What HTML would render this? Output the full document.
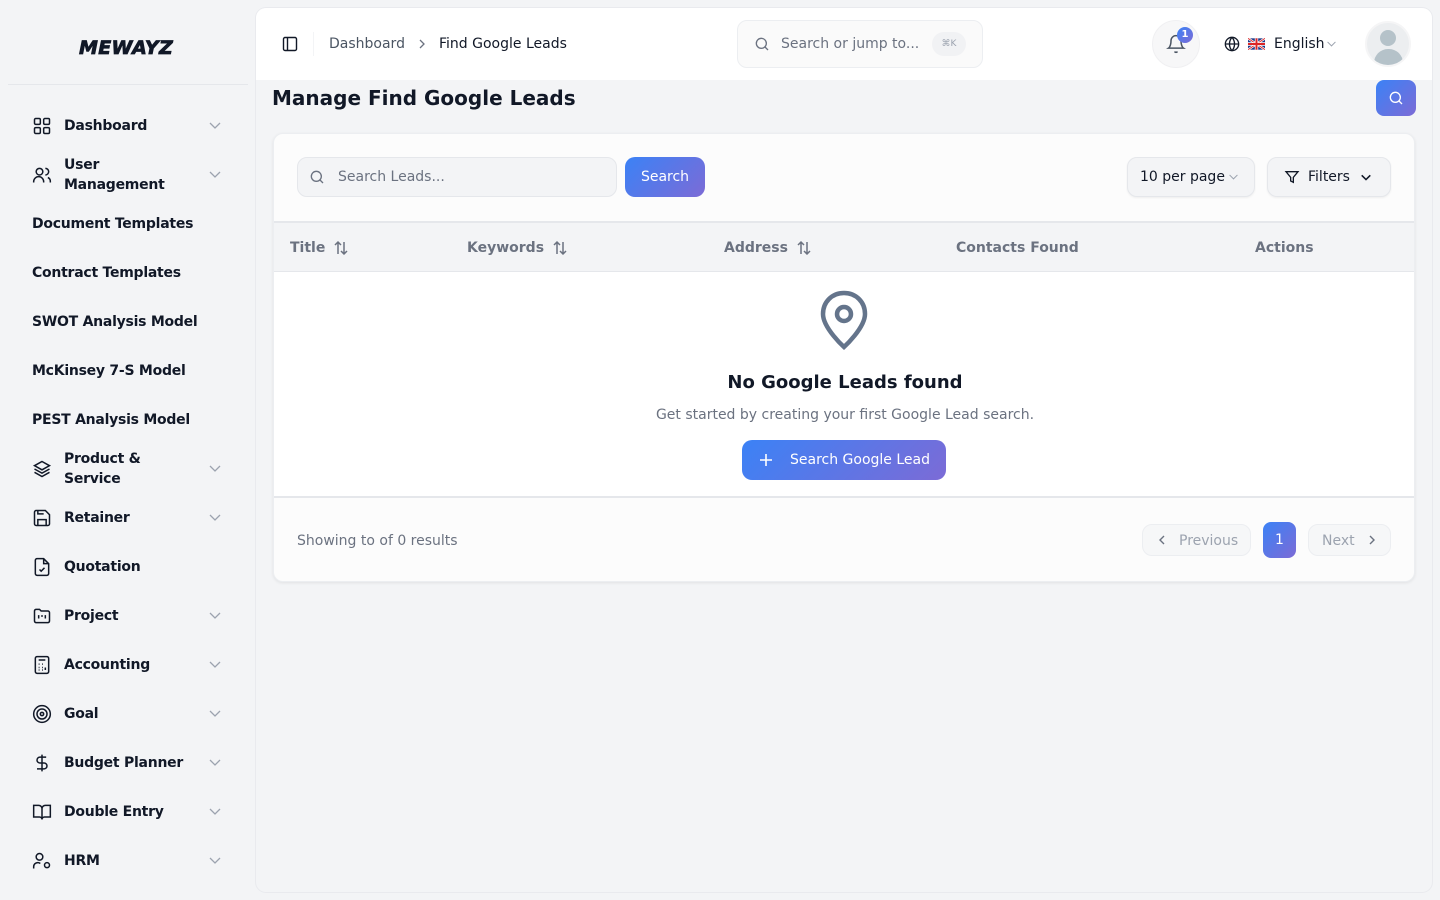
<!DOCTYPE html>
<html><head><meta charset="utf-8">
<style>
*{box-sizing:border-box;margin:0;padding:0}
body{width:1440px;height:900px;background:#f3f4f6;font-family:"DejaVu Sans","Liberation Sans",sans-serif;color:#111827;position:relative;overflow:hidden}
.abs{position:absolute}
svg{display:block}
.nav{position:absolute;left:32px;width:190px;display:flex;align-items:center;font-size:14px;font-weight:bold;color:#111827;line-height:20px;letter-spacing:-0.25px}
.nav .ic{width:20px;height:20px;margin-right:12px;flex:none}
.nav .ch{position:absolute;right:0;top:50%;margin-top:-8px}
.grad{background:linear-gradient(135deg,#3b82f6,#7c6bd6)}
.th{position:absolute;top:106px;font-size:14px;font-weight:bold;color:#6b7280;display:flex;align-items:center}
.th svg{margin-left:8px}
</style></head><body>
<svg width="0" height="0" style="position:absolute"><defs>
<symbol id="chev" viewBox="0 0 14 14"><path d="M2 5l5 5 5-5" fill="none" stroke="#9ca3af" stroke-width="1.3"/></symbol>
<symbol id="sort" viewBox="0 0 16 16"><path d="M5 14V2M2 5l3-3 3 3M11 2v12M8 11l3 3 3-3" fill="none" stroke="#6b7280" stroke-width="1.5"/></symbol>
</defs></svg>

<div class="abs" style="left:79px;top:37px;font-size:19px;font-weight:900;font-style:italic;letter-spacing:0.3px;-webkit-text-stroke:0.8px #111827">MEWAYZ</div>
<div class="abs" style="left:8px;top:84px;width:240px;height:1px;background:#e5e7eb"></div>

<div class="nav" style="top:116px"><svg class="ic" viewBox="0 0 24 24" fill="none" stroke="#111827" stroke-width="1.8"><rect x="3" y="3" width="7" height="7" rx="1.5"/><rect x="14" y="3" width="7" height="7" rx="1.5"/><rect x="3" y="14" width="7" height="7" rx="1.5"/><rect x="14" y="14" width="7" height="7" rx="1.5"/></svg>Dashboard<svg class="ch" width="14" height="14"><use href="#chev"/></svg></div>
<div class="nav" style="top:155px"><svg class="ic" viewBox="0 0 24 24" fill="none" stroke="#111827" stroke-width="1.8"><circle cx="9" cy="8" r="4"/><path d="M2 21v-1a6 6 0 0 1 12 0v1M16 4a4 4 0 0 1 0 8M19 15a5 5 0 0 1 3 5v1"/></svg><span>User<br>Management</span><svg class="ch" width="14" height="14"><use href="#chev"/></svg></div>
<div class="nav" style="top:214px">Document Templates</div>
<div class="nav" style="top:263px">Contract Templates</div>
<div class="nav" style="top:312px">SWOT Analysis Model</div>
<div class="nav" style="top:361px">McKinsey 7-S Model</div>
<div class="nav" style="top:410px">PEST Analysis Model</div>
<div class="nav" style="top:449px"><svg class="ic" viewBox="0 0 24 24" fill="none" stroke="#111827" stroke-width="1.8"><path d="M12 3l9 5-9 5-9-5z"/><path d="M3 12l9 5 9-5M3 16l9 5 9-5"/></svg><span>Product &amp;<br>Service</span><svg class="ch" width="14" height="14"><use href="#chev"/></svg></div>
<div class="nav" style="top:508px"><svg class="ic" viewBox="0 0 24 24" fill="none" stroke="#111827" stroke-width="1.8"><path d="M5 3h11l5 5v11a2 2 0 0 1-2 2H5a2 2 0 0 1-2-2V5a2 2 0 0 1 2-2z"/><path d="M7 21v-7h10v7M7 3v4h7"/></svg>Retainer<svg class="ch" width="14" height="14"><use href="#chev"/></svg></div>
<div class="nav" style="top:557px"><svg class="ic" viewBox="0 0 24 24" fill="none" stroke="#111827" stroke-width="1.8"><path d="M14 2H6a2 2 0 0 0-2 2v16a2 2 0 0 0 2 2h12a2 2 0 0 0 2-2V8z"/><path d="M14 2v6h6M9 15l2 2 4-4"/></svg>Quotation</div>
<div class="nav" style="top:606px"><svg class="ic" viewBox="0 0 24 24" fill="none" stroke="#111827" stroke-width="1.8"><path d="M3 6a2 2 0 0 1 2-2h4l2 2h8a2 2 0 0 1 2 2v10a2 2 0 0 1-2 2H5a2 2 0 0 1-2-2z"/><path d="M8 11v4M12 11v2M16 11v4"/></svg>Project<svg class="ch" width="14" height="14"><use href="#chev"/></svg></div>
<div class="nav" style="top:655px"><svg class="ic" viewBox="0 0 24 24" fill="none" stroke="#111827" stroke-width="1.8"><rect x="4" y="2" width="16" height="20" rx="2"/><path d="M8 6h8M8 11h1M12 11h1M16 11h0M8 15h1M12 15h1M16 15v3M8 18h1M12 18h1"/></svg>Accounting<svg class="ch" width="14" height="14"><use href="#chev"/></svg></div>
<div class="nav" style="top:704px"><svg class="ic" viewBox="0 0 24 24" fill="none" stroke="#111827" stroke-width="1.8"><circle cx="12" cy="12" r="10"/><circle cx="12" cy="12" r="6"/><circle cx="12" cy="12" r="2"/></svg>Goal<svg class="ch" width="14" height="14"><use href="#chev"/></svg></div>
<div class="nav" style="top:753px"><svg class="ic" viewBox="0 0 24 24" fill="none" stroke="#111827" stroke-width="1.8"><path d="M12 2v20M17 5H9.5a3.5 3.5 0 0 0 0 7h5a3.5 3.5 0 0 1 0 7H6"/></svg>Budget Planner<svg class="ch" width="14" height="14"><use href="#chev"/></svg></div>
<div class="nav" style="top:802px"><svg class="ic" viewBox="0 0 24 24" fill="none" stroke="#111827" stroke-width="1.8"><path d="M2 4h6a4 4 0 0 1 4 4v13a3 3 0 0 0-3-3H2zM22 4h-6a4 4 0 0 0-4 4v13a3 3 0 0 1 3-3h7z"/></svg>Double Entry<svg class="ch" width="14" height="14"><use href="#chev"/></svg></div>
<div class="nav" style="top:851px"><svg class="ic" viewBox="0 0 24 24" fill="none" stroke="#111827" stroke-width="1.8"><circle cx="9" cy="7" r="4"/><path d="M2 21v-2a5 5 0 0 1 8-4"/><circle cx="18" cy="17" r="3"/></svg>HRM<svg class="ch" width="14" height="14"><use href="#chev"/></svg></div>

<div class="abs" style="left:256px;top:8px;width:1176px;height:884px;background:#f3f4f6;border-radius:10px;box-shadow:0 0 0 1px #e9eaee"></div>
<div class="abs" style="left:256px;top:8px;width:1176px;height:72px;background:#fff;border-radius:10px 10px 0 0"></div>
<svg class="abs" style="left:282px;top:36px" width="16" height="16" viewBox="0 0 16 16" fill="none" stroke="#111827" stroke-width="1.4"><rect x="1.5" y="1.5" width="13" height="13" rx="1.5"/><path d="M5.5 1.5v13"/></svg>
<div class="abs" style="left:313px;top:32px;width:1px;height:24px;background:#f3f4f6"></div>
<div class="abs" style="left:329px;top:36px;font-size:14px;color:#4b5563">Dashboard</div>
<svg class="abs" style="left:417px;top:39px" width="10" height="10" viewBox="0 0 10 10"><path d="M3 1l4 4-4 4" fill="none" stroke="#6b7280" stroke-width="1.3"/></svg>
<div class="abs" style="left:439px;top:36px;font-size:14px;color:#111827">Find Google Leads</div>

<div class="abs" style="left:737px;top:20px;width:246px;height:48px;background:#fafafa;border:1px solid #eceef1;border-radius:10px"></div>
<svg class="abs" style="left:754px;top:36px" width="16" height="16" viewBox="0 0 24 24" fill="none" stroke="#6b7280" stroke-width="2"><circle cx="11" cy="11" r="7.5"/><path d="M21 21l-4.5-4.5"/></svg>
<div class="abs" style="left:781px;top:36px;font-size:14px;color:#6b7280">Search or jump to...</div>
<div class="abs" style="left:932px;top:32px;width:34px;height:24px;background:#f1f2f4;border-radius:12px;font-size:9px;color:#9ca3af;text-align:center;line-height:24px">⌘K</div>

<div class="abs" style="left:1152px;top:20px;width:48px;height:48px;border-radius:50%;background:#f7f7f8;border:1px solid #f0f0f2"></div>
<svg class="abs" style="left:1166px;top:34px" width="20" height="20" viewBox="0 0 24 24" fill="none" stroke="#4b5563" stroke-width="1.8"><path d="M6 8a6 6 0 0 1 12 0c0 7 3 9 3 9H3s3-2 3-9M10.3 21a1.9 1.9 0 0 0 3.4 0"/></svg>
<div class="abs grad" style="left:1177px;top:27px;width:16px;height:16px;border-radius:50%;color:#fff;font-size:10px;font-weight:bold;text-align:center;line-height:16px">1</div>

<svg class="abs" style="left:1224px;top:36px" width="16" height="16" viewBox="0 0 24 24" fill="none" stroke="#111827" stroke-width="2"><circle cx="12" cy="12" r="10"/><path d="M2 12h20M12 2a15 15 0 0 1 0 20M12 2a15 15 0 0 0 0 20"/></svg>
<svg class="abs" style="left:1248px;top:38px" width="17" height="12" viewBox="0 0 60 40"><rect width="60" height="40" fill="#1e3a8a"/><path d="M0 0l60 40M60 0L0 40" stroke="#fff" stroke-width="8"/><path d="M0 0l60 40M60 0L0 40" stroke="#dc2626" stroke-width="3"/><path d="M30 0v40M0 20h60" stroke="#fff" stroke-width="12"/><path d="M30 0v40M0 20h60" stroke="#dc2626" stroke-width="7"/></svg>
<div class="abs" style="left:1274px;top:36px;font-size:14px;color:#111827">English</div>
<svg class="abs" style="left:1326px;top:38px" width="11" height="11"><use href="#chev"/></svg>

<div class="abs" style="left:1365px;top:21px;width:46px;height:46px;border-radius:50%;background:#eceef0;border:2px solid #f5f5f6;overflow:hidden">
<div class="abs" style="left:13px;top:7px;width:16px;height:16px;border-radius:50%;background:#b5c2c9"></div>
<div class="abs" style="left:7px;top:26px;width:29px;height:20px;border-radius:14px 14px 0 0;background:#b5c2c9"></div></div>

<div class="abs" style="left:272px;top:86px;font-size:20px;font-weight:bold;color:#111827">Manage Find Google Leads</div>
<div class="abs grad" style="left:1376px;top:80px;width:40px;height:36px;border-radius:8px"></div>
<svg class="abs" style="left:1388px;top:90px" width="16" height="16" viewBox="0 0 24 24" fill="none" stroke="#fff" stroke-width="2"><circle cx="11" cy="11" r="7.5"/><path d="M21 21l-4.5-4.5"/></svg>

<div class="abs" style="left:273px;top:133px;width:1142px;height:449px;background:#fcfcfc;border:1px solid #eceef1;border-radius:10px;box-shadow:0 1px 3px rgba(0,0,0,.08);overflow:hidden">
  <div class="abs" style="left:23px;top:23px;width:320px;height:40px;background:#f3f4f6;border:1px solid #e5e7eb;border-radius:10px"></div>
  <svg class="abs" style="left:35px;top:35px" width="16" height="16" viewBox="0 0 24 24" fill="none" stroke="#6b7280" stroke-width="2"><circle cx="11" cy="11" r="7.5"/><path d="M21 21l-4.5-4.5"/></svg>
  <div class="abs" style="left:64px;top:35px;font-size:14px;color:#6b7280">Search Leads...</div>
  <div class="abs grad" style="left:351px;top:23px;width:80px;height:40px;border-radius:10px;color:#fff;font-size:14px;text-align:center;line-height:40px">Search</div>
  <div class="abs" style="left:853px;top:23px;width:128px;height:40px;background:#f3f4f6;border:1px solid #e5e7eb;border-radius:10px;box-shadow:0 1px 2px rgba(0,0,0,.06)"></div>
  <div class="abs" style="left:866px;top:35px;font-size:14px;color:#111827">10 per page</div>
  <svg class="abs" style="left:954px;top:37px" width="11" height="11"><use href="#chev"/></svg>
  <div class="abs" style="left:993px;top:23px;width:124px;height:40px;background:#f3f4f6;border:1px solid #e5e7eb;border-radius:10px;box-shadow:0 1px 2px rgba(0,0,0,.06)"></div>
  <svg class="abs" style="left:1010px;top:35px" width="16" height="16" viewBox="0 0 24 24" fill="none" stroke="#111827" stroke-width="2"><path d="M3 4h18l-7 8.5V20l-4-2v-5.5z"/></svg>
  <div class="abs" style="left:1034px;top:35px;font-size:14px;color:#111827">Filters</div>
  <svg class="abs" style="left:1086px;top:37px" width="12" height="12" viewBox="0 0 14 14"><path d="M2 5l5 5 5-5" fill="none" stroke="#111827" stroke-width="1.8"/></svg>

  <div class="abs" style="left:0;top:87px;width:1142px;height:51px;background:#f3f4f6;border-top:2px solid #e5e7eb;border-bottom:1px solid #e5e7eb"></div>
  <div class="th" style="left:16px">Title<svg width="16" height="16"><use href="#sort"/></svg></div>
  <div class="th" style="left:193px">Keywords<svg width="16" height="16"><use href="#sort"/></svg></div>
  <div class="th" style="left:450px">Address<svg width="16" height="16"><use href="#sort"/></svg></div>
  <div class="th" style="left:682px">Contacts Found</div>
  <div class="th" style="left:981px">Actions</div>

  <div class="abs" style="left:0;top:138px;width:1142px;height:226px;background:#fff;border-bottom:2px solid #e5e7eb"></div>
  <svg class="abs" style="left:545px;top:155px" width="50" height="62" viewBox="0 0 50 62" fill="none" stroke="#64748b" stroke-width="4.5"><path d="M25 4C13 4 4 13 4 25c0 14 21 33 21 33s21-19 21-33C46 13 37 4 25 4z"/><circle cx="25" cy="25" r="7"/></svg>
  <div class="abs" style="left:0;width:1142px;top:238px;text-align:center;font-size:18px;font-weight:bold;color:#111827">No Google Leads found</div>
  <div class="abs" style="left:0;width:1142px;top:273px;text-align:center;font-size:14px;color:#6b7280">Get started by creating your first Google Lead search.</div>
  <div class="abs grad" style="left:468px;top:306px;width:204px;height:40px;border-radius:10px;color:#fff;font-size:14px;line-height:40px"><svg class="abs" style="left:17px;top:13px" width="14" height="14" viewBox="0 0 14 14"><path d="M7 1v12M1 7h12" stroke="#fff" stroke-width="1.6"/></svg><span style="position:absolute;left:48px">Search Google Lead</span></div>

  <div class="abs" style="left:23px;top:399px;font-size:14px;color:#6b7280">Showing to of 0 results</div>
  <div class="abs" style="left:868px;top:390px;width:109px;height:32px;background:#f6f7f8;border:1px solid #eceef1;border-radius:10px;font-size:14px;color:#9ca3af;line-height:30px"><svg class="abs" style="left:14px;top:10px" width="10" height="10" viewBox="0 0 10 10"><path d="M7 1L3 5l4 4" fill="none" stroke="#6b7280" stroke-width="1.4"/></svg><span style="position:absolute;left:36px;top:1px">Previous</span></div>
  <div class="abs grad" style="left:989px;top:388px;width:33px;height:36px;border-radius:8px;color:#fff;font-size:14px;text-align:center;line-height:36px">1</div>
  <div class="abs" style="left:1034px;top:390px;width:83px;height:32px;background:#f6f7f8;border:1px solid #eceef1;border-radius:10px;font-size:14px;color:#9ca3af;line-height:30px"><span style="position:absolute;left:13px;top:1px">Next</span><svg class="abs" style="left:58px;top:10px" width="10" height="10" viewBox="0 0 10 10"><path d="M3 1l4 4-4 4" fill="none" stroke="#6b7280" stroke-width="1.4"/></svg></div>
</div>
</body></html>
